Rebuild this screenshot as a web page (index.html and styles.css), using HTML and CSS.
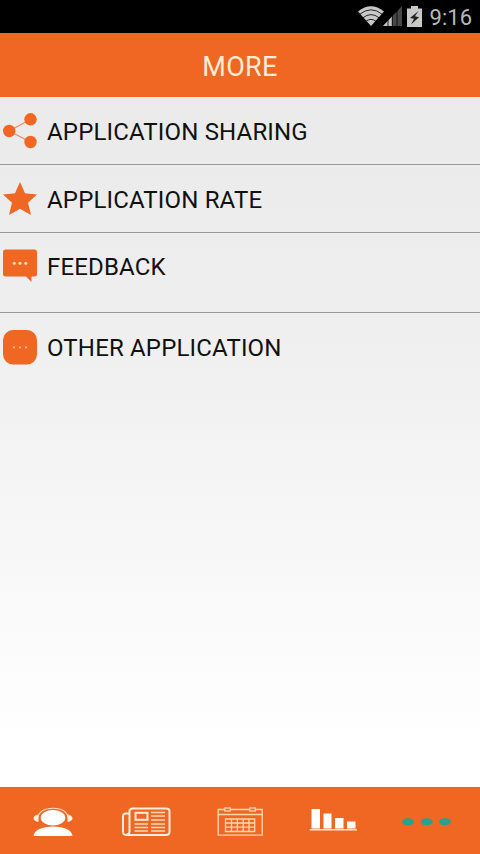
FILE: index.html
```html
<!DOCTYPE html>
<html lang="en">
<head>
    <meta charset="UTF-8">
    <meta name="viewport" content="width=device-width, initial-scale=1.0">
    <title>More</title>
    <link rel="stylesheet" href="styles.css">
</head>
<body>
<div class="app">
    <!-- Status bar -->
    <div class="status-bar">
        <svg class="wifi" width="26" height="20" viewBox="0 0 26 20">
            <path d="M0 5.5Q13 -5 26 5.5L13 20Z" fill="#c8c8c8"/>
            <path d="M1.8 8.2Q13 -.6 24.2 8.2M4.9 11.8Q13 5.4 21.1 11.8M8 15.2Q13 11.6 18 15.2" fill="none" stroke="#111" stroke-width=".9"/>
        </svg>
        <svg class="signal" width="19" height="20" viewBox="0 0 19 20">
            <path d="M0 20L19 0V20Z" fill="#484848"/>
            <path d="M0 20L9 10.5V20Z" fill="#c4c4c4"/>
            <path d="M5 12V20M9.3 8V20M14 4V20" stroke="#000" stroke-width=".8"/>
        </svg>
        <svg class="battery" width="15" height="21" viewBox="0 0 15 21">
            <path d="M4 0H11V2.5H15V21H0V2.5H4Z" fill="#c8c8c8"/>
            <path d="M11.5 5L3 12L7 12.8L4 18.5L12 11.2L8 10.3Z" fill="#222"/>
        </svg>
        <span class="time">9:16</span>
    </div>

    <!-- Title -->
    <header class="header">
        <h1>MORE</h1>
    </header>

    <!-- Menu -->
    <ul class="menu">
        <li class="menu-item">
            <svg class="menu-icon" width="34" height="36" viewBox="0 0 34 36">
                <path d="M27.5 6.5L6 18L27.5 29" fill="none" stroke="#e58a68" stroke-width="1.2"/>
                <circle cx="27.5" cy="6.3" r="6.2" fill="#f06623"/>
                <circle cx="6.2" cy="18" r="6.2" fill="#f06623"/>
                <circle cx="27.5" cy="29" r="6.2" fill="#f06623"/>
            </svg>
            <span>APPLICATION SHARING</span>
        </li>
        <li class="menu-item">
            <svg class="menu-icon" width="34" height="36" viewBox="0 0 34 36">
                <path d="M17 1L22 12.3L34 13.5L25 21.8L28 34L17 27.7L6 34L9 21.8L0 13.5L12 12.3Z" fill="#f06623"/>
            </svg>
            <span>APPLICATION RATE</span>
        </li>
        <li class="menu-item tall">
            <svg class="menu-icon" width="34" height="36" viewBox="0 0 34 36">
                <path d="M2.5 .5H31.5Q34 .5 34 3V25Q34 27.5 31.5 27.5H28.5V33L23 27.5H2.5Q0 27.5 0 25V3Q0 .5 2.5 .5Z" fill="#f06623"/>
                <g fill="#ffe2c4">
                    <circle cx="11.3" cy="14.3" r="1.5"/>
                    <circle cx="17" cy="14.3" r="1.5"/>
                    <circle cx="22.8" cy="14.3" r="1.5"/>
                </g>
            </svg>
            <span>FEEDBACK</span>
        </li>
        <li class="menu-item last">
            <svg class="menu-icon" width="34" height="36" viewBox="0 0 34 36">
                <rect x="0" y="1" width="34" height="34.5" rx="10" fill="#f06623"/>
                <g fill="#ffc49c">
                    <circle cx="11" cy="18.5" r="1.1"/>
                    <circle cx="17" cy="18.5" r="1.1"/>
                    <circle cx="23" cy="18.5" r="1.1"/>
                </g>
            </svg>
            <span>OTHER APPLICATION</span>
        </li>
    </ul>

    <!-- Bottom tabs -->
    <nav class="tabs">
        <a class="tab" href="#">
            <svg width="50" height="32" viewBox="0 0 50 32">
                <ellipse cx="25" cy="11.7" rx="12.3" ry="7.7" fill="#fff"/>
                <path d="M9.5 12C11 5 17 2.2 25 2.2S39 5 40.5 12" fill="none" stroke="#ffe0c6" stroke-width="1.1"/>
                <path d="M10.5 8.5Q5.5 9.5 5.5 12.2T10.5 16ZM39.5 8.5Q44.5 9.5 44.5 12.2T39.5 16Z" fill="#fff0e2"/>
                <path d="M5.5 30C6 24 14 20.5 25 20.5S44 24 44.5 30Z" fill="#fff"/>
            </svg>
        </a>
        <a class="tab" href="#">
            <svg width="50" height="32" viewBox="0 0 50 32">
                <path d="M8 7.5H5Q2 7.5 2 10V26Q2 29 6 29H45Q48.5 29 48.5 26V5Q48.5 2.5 45 2.5H12Q8.5 2.5 8.5 5V25.5Q8.5 28.5 5.5 28.5" fill="none" stroke="#ffecd9" stroke-width="2"/>
                <rect x="14.5" y="6.8" width="12" height="7" fill="none" stroke="#ffecd9" stroke-width="2"/>
                <path d="M30 6.5H44M30 10H44M30 14H44M13.5 18H27M30 18H44M13.5 21.5H27M30 21.5H44M13.5 25H27M30 25H44" stroke="#ffd9b8" stroke-width="1.3"/>
            </svg>
        </a>
        <a class="tab" href="#">
            <svg width="50" height="32" viewBox="0 0 50 32">
                <g fill="none" stroke="#ffd9ae" stroke-width="1.3">
                    <path d="M9.5 3.5H3.2V29.2H47.2V3.5H40.5M15.5 3.5H34.5M3.2 8.5H47.2"/>
                    <rect x="9.8" y="2" width="5.5" height="3"/>
                    <rect x="34.8" y="2" width="5.5" height="3"/>
                    <path d="M10.5 13H39.7V25.5H10.5ZM10.5 17H39.7M10.5 21.2H39.7M16.5 13V25.5M22.3 13V25.5M28.2 13V25.5M34 13V25.5"/>
                </g>
            </svg>
        </a>
        <a class="tab" href="#">
            <svg width="50" height="32" viewBox="0 0 50 32">
                <path d="M2.5 3H11V22.5H2.5ZM14.5 7.5H22.5V22.5H14.5ZM26 12H34.5V22.5H26ZM38 15.5H46.5V22.5H38Z" fill="#fff"/>
                <path d="M.7 23.7H48" stroke="#ffe4cc" stroke-width="1.4"/>
            </svg>
        </a>
        <a class="tab active" href="#">
            <svg width="50" height="32" viewBox="0 0 50 32">
                <g fill="#2ba08b">
                    <rect x="0" y="12.2" width="12" height="7" rx="5.5" ry="3.5"/>
                    <rect x="18.7" y="12.2" width="12" height="7" rx="5.5" ry="3.5"/>
                    <rect x="37" y="12.2" width="12" height="7" rx="5.5" ry="3.5"/>
                </g>
            </svg>
        </a>
    </nav>
</div>
</body>
</html>
```

FILE: styles.css
```css
* {
    box-sizing: border-box;
}

body {
    margin: 0;
    font-family: Roboto, 'Liberation Sans', sans-serif;
    color: #111;
}

.app {
    display: flex;
    flex-direction: column;
    height: 100vh;
    min-height: 854px;
    background: #fff;
}

svg {
    display: block;
    flex-shrink: 0;
}

/* status bar */
.status-bar {
    display: flex;
    justify-content: flex-end;
    align-items: flex-start;
    height: 33px;
    padding: 6px 8px 0 0;
    background: #000;
}

.signal {
    margin-left: -1px;
}

.battery {
    margin-left: 5px;
}

.time {
    margin-left: 8px;
    color: #b8b8b8;
    font-size: 22px;
    line-height: 24px;
}

/* header */
.header {
    display: flex;
    justify-content: center;
    align-items: center;
    height: 64px;
    background: #f06623;
}

.header h1 {
    margin: 0;
    padding-top: 3px;
    color: #ffecd6;
    font-size: 27px;
    font-weight: normal;
    letter-spacing: 0.3px;
}

/* menu */
.menu {
    flex: 1;
    margin: 0;
    padding: 0;
    list-style: none;
    background: linear-gradient(#eaeaea, #efefef 35%, #fff 94%);
}

.menu-item {
    display: flex;
    align-items: flex-start;
    gap: 10px;
    height: 68px;
    padding: 16px 3px 0;
    border-bottom: 1px solid #999;
    font-size: 24px;
    line-height: 38px;
    letter-spacing: 0.17px;
}

.menu-item.tall {
    height: 80px;
    line-height: 36px;
}

.menu-item.last {
    border-bottom: none;
}

/* bottom tabs */
.tabs {
    display: flex;
    height: 67px;
    padding: 0 6px;
    background: #f06623;
}

.tab {
    display: flex;
    flex: 1;
    justify-content: center;
    align-items: flex-start;
    padding-top: 19px;
}
```
